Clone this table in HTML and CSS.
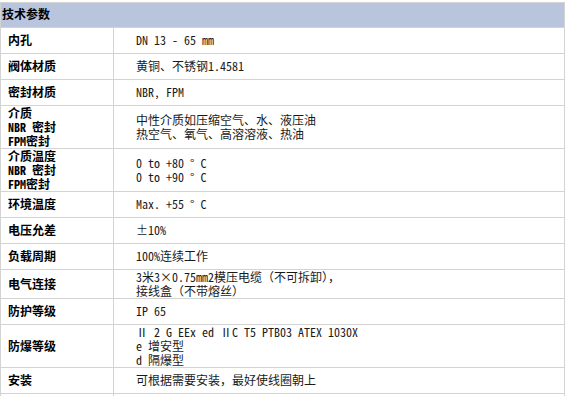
FILE: index.html
```html
<!DOCTYPE html>
<html lang="zh-CN">
<head>
<meta charset="utf-8">
<title>技术参数</title>
<link rel="stylesheet" href="styles.css">
</head>
<body>
<table class="spec">
  <colgroup>
    <col class="col-k">
    <col class="col-v">
  </colgroup>
  <thead>
    <tr class="head"><th colspan="2">技术参数</th></tr>
  </thead>
  <tbody>
    <tr><td class="k">内孔</td><td class="v">DN 13 - 65 mm</td></tr>
    <tr><td class="k">阀体材质</td><td class="v">黄铜、不锈钢1.4581</td></tr>
    <tr><td class="k">密封材质</td><td class="v">NBR, FPM</td></tr>
    <tr class="multi"><td class="k">介质<br>NBR 密封<br>FPM密封</td><td class="v">中性介质如压缩空气、水、液压油<br>热空气、氧气、高溶溶液、热油</td></tr>
    <tr class="multi"><td class="k">介质温度<br>NBR 密封<br>FPM密封</td><td class="v">0 to +80 ° C<br>0 to +90 ° C</td></tr>
    <tr><td class="k">环境温度</td><td class="v">Max. +55 ° C</td></tr>
    <tr><td class="k">电压允差</td><td class="v">±10%</td></tr>
    <tr><td class="k">负载周期</td><td class="v">100%连续工作</td></tr>
    <tr class="multi"><td class="k">电气连接</td><td class="v">3米3×0.75mm2模压电缆（不可拆卸），<br>接线盒（不带熔丝）</td></tr>
    <tr><td class="k">防护等级</td><td class="v">IP 65</td></tr>
    <tr class="multi"><td class="k">防爆等级</td><td class="v">Ⅱ 2 G EEx ed ⅡC T5 PTB03 ATEX 1030X<br>e 增安型<br>d 隔爆型</td></tr>
    <tr><td class="k">安装</td><td class="v">可根据需要安装，最好使线圈朝上</td></tr>
    <tr class="tail"><td class="k"></td><td class="v"></td></tr>
  </tbody>
</table>
</body>
</html>
```

FILE: styles.css
```css
html, body {
  margin: 0;
  padding: 0;
  background: #fff;
}
body {
  padding-top: 2px;
  font-family: "Noto Sans Mono CJK SC", "Noto Sans CJK SC", sans-serif;
  font-size: 12px;
  line-height: 14px;
  color: #000;
}
.spec {
  border-collapse: collapse;
  width: 565px;
  table-layout: fixed;
}
.col-k {
  width: 113px;
}
.spec th,
.spec td {
  border: 1px solid #d3d3d3;
  padding: 0;
  vertical-align: middle;
}
.head th {
  background: #b9c5dd;
  text-align: left;
  font-weight: bold;
  height: 22px;
  padding-left: 1px;
  padding-bottom: 2px;
}
.spec td {
  height: 24px;
  padding-bottom: 1px;
}
.spec .multi td {
  padding-bottom: 0;
}
.spec td.k {
  padding-left: 7px;
  font-weight: bold;
}
.spec td.v {
  padding-left: 22px;
  color: #1a1a1a;
}
.spec .tail td {
  height: 10px;
}
```
